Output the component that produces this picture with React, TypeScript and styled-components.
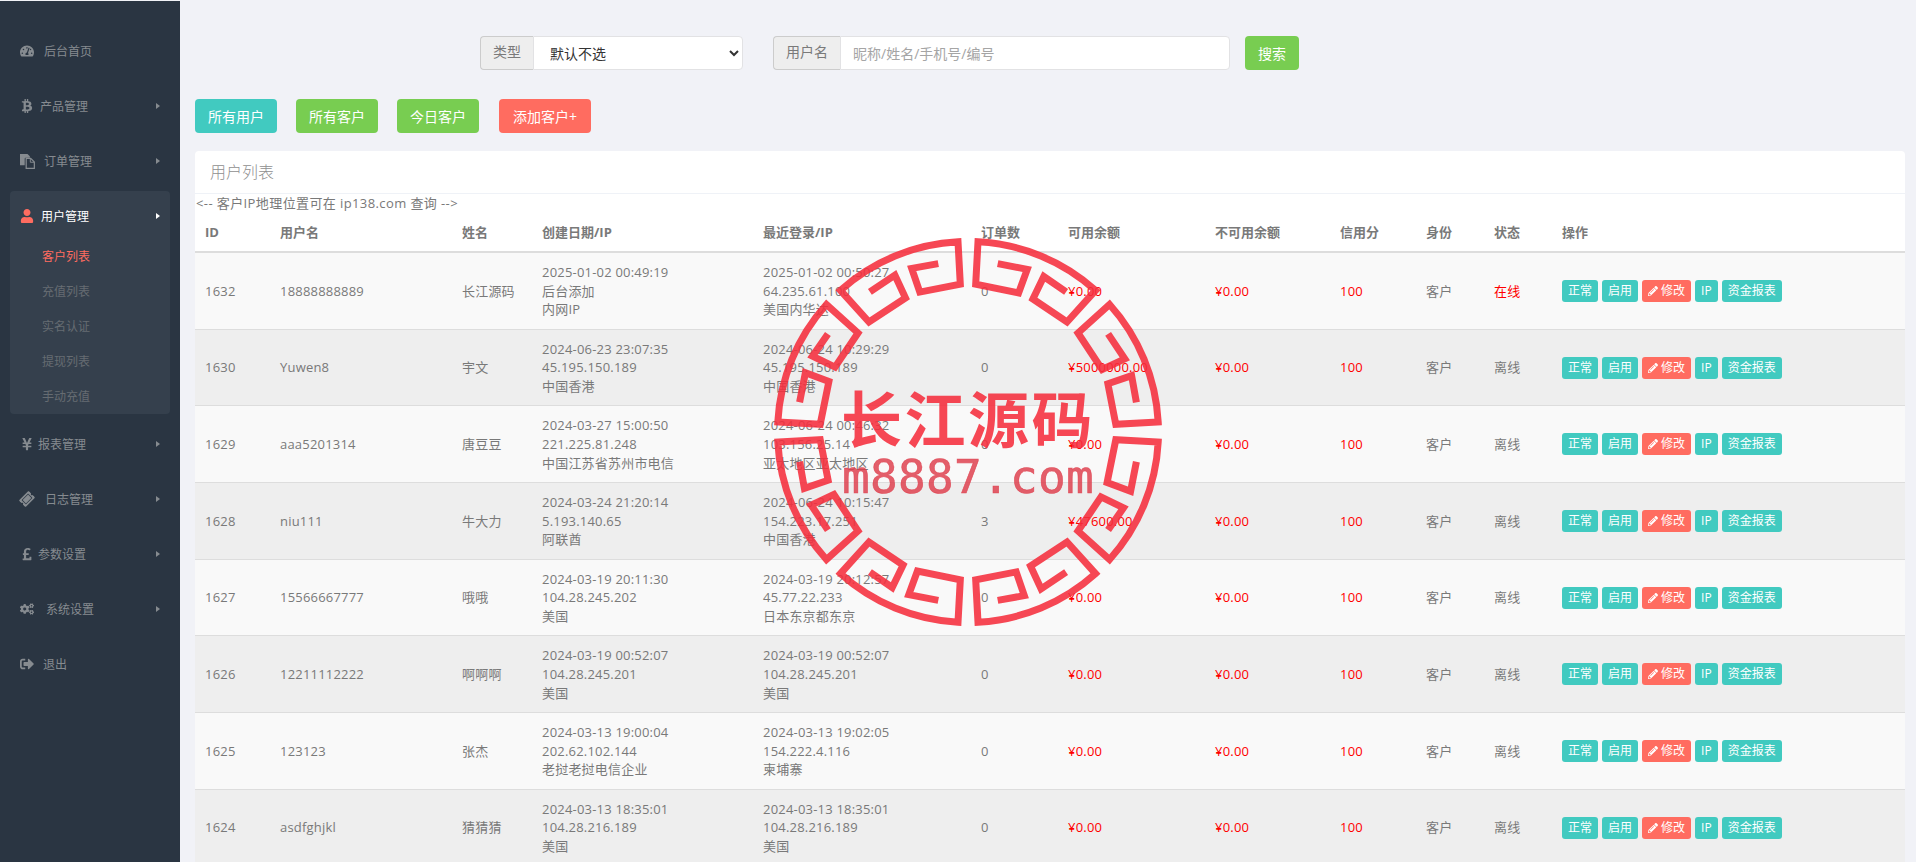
import React from "react";
import styled, { createGlobalStyle } from "styled-components";
import {
  FaTachometerAlt, FaBtc, FaUser, FaYenSign, FaTicketAlt, FaPoundSign, FaCogs, FaSignOutAlt, FaPencilAlt,
} from "react-icons/fa";

const FONT = `"Open Sans", "Noto Sans CJK SC", sans-serif`;

const Global = createGlobalStyle`
  html, body { margin: 0; padding: 0; height: 100%; overflow: hidden; background: #f1f2f7; }
  body { font-family: ${FONT}; font-size: 13px; line-height: 1.42857; color: #797979; }
  * { box-sizing: border-box; }
`;

const Shell = styled.div`
  position: relative;
  display: grid;
  grid-template-columns: 180px 1fr;
  height: 862px;
  padding-top: 1px;
  overflow: hidden;
`;

const Sidebar = styled.nav`
  background: #2a3542;
  padding: 25px 10px 0;
`;

const Group = styled.div<{ $open?: boolean }>`
  margin-bottom: 5px;
  border-radius: 4px;
  background: ${(p) => (p.$open ? "#35404d" : "transparent")};
  padding-bottom: ${(p) => (p.$open ? "1px" : "0")};
`;

const MenuItem = styled.div<{ $open?: boolean }>`
  display: flex;
  align-items: center;
  height: 50px;
  padding: 2px 10px 0;
  font-size: 12px;
  color: ${(p) => (p.$open ? "#ffffff" : "#868b90")};
`;

const MenuIcon = styled.span<{ $w: number; $open?: boolean; $tilt?: boolean }>`
  display: flex;
  align-items: center;
  width: ${(p) => p.$w}px;
  flex: none;
  margin-top: -2px;
  font-size: 14px;
  color: ${(p) => (p.$open ? "#ff6c60" : "#868b90")};
  svg { transform: ${(p) => (p.$tilt ? "rotate(-45deg)" : "none")}; }
`;

const Caret = styled.i<{ $open?: boolean }>`
  margin-left: auto;
  margin-top: -2px;
  border-left: 4px solid ${(p) => (p.$open ? "#ffffff" : "#868b90")};
  border-top: 3.5px solid transparent;
  border-bottom: 3.5px solid transparent;
`;

const SubList = styled.div`
  margin-top: -3px;
`;

const SubItem = styled.div<{ $active?: boolean }>`
  height: 35px;
  line-height: 37px;
  padding-left: 32px;
  font-size: 12px;
  color: ${(p) => (p.$active ? "#ff6c60" : "#666c72")};
`;

const Main = styled.main`
  padding: 35px 11px 0 15px;
  min-width: 0;
`;

const SearchBar = styled.form`
  display: flex;
  align-items: center;
  height: 34px;
  margin: 0;
  padding-left: 285px;
`;

const InputGroup = styled.div<{ $width: number }>`
  display: flex;
  width: ${(p) => p.$width}px;
  height: 34px;
  margin-right: ${(p) => (p.$width > 300 ? 15 : 30)}px;
`;

const Addon = styled.span<{ $width: number }>`
  flex: none;
  width: ${(p) => p.$width}px;
  background: #eeeeee;
  border: 1px solid #cccccc;
  border-right: 0;
  border-radius: 4px 0 0 4px;
  text-align: center;
  line-height: 29px;
  color: #7a7a7a;
  font-size: 14px;
`;

const Select = styled.select`
  flex: 1;
  min-width: 0;
  border: 1px solid #e2e2e4;
  border-radius: 0 4px 4px 0;
  background: #fff;
  padding: 0 12px;
  font: 14px ${FONT};
  color: #333;
  outline: none;
`;

const TextInput = styled.input`
  flex: 1;
  min-width: 0;
  border: 1px solid #e2e2e4;
  border-radius: 0 4px 4px 0;
  background: #fff;
  padding: 0 12px;
  font: 14px ${FONT};
  color: #333;
  outline: none;
  &::placeholder { color: #a5a5a5; opacity: 1; }
`;

const tones = { teal: "#41cac0", green: "#78cd51", red: "#ff6c60" };
type Tone = keyof typeof tones;

const Button = styled.button<{ $tone: Tone; $width: number; $gap?: number }>`
  flex: none;
  width: ${(p) => p.$width}px;
  height: 34px;
  margin-right: ${(p) => p.$gap ?? 0}px;
  padding: 0;
  border: 0;
  border-radius: 4px;
  background: ${(p) => tones[p.$tone]};
  color: #fff;
  font: 14px ${FONT};
`;

const ButtonRow = styled.div`
  display: flex;
  margin-top: 29px;
`;

const Panel = styled.section`
  margin-top: 18px;
  background: #fff;
  border-radius: 4px 4px 0 0;
`;

const PanelHeading = styled.header`
  height: 43px;
  padding: 0 15px;
  line-height: 43px;
  font-size: 16px;
  font-weight: 300;
  color: #8f8f8f;
  border-bottom: 1px solid #eff2f7;
`;

const Note = styled.div`
  height: 18px;
  padding-left: 1px;
  line-height: 18px;
  font-size: 13px;
  letter-spacing: 0.4px;
  color: #797979;
`;

const Table = styled.table`
  width: 100%;
  table-layout: fixed;
  border-collapse: collapse;
  border-spacing: 0;
`;

const Th = styled.th`
  padding: 11px 10px 9px;
  height: 40px;
  text-align: left;
  font-weight: 700;
  font-size: 13px;
  line-height: 18.57px;
  color: #797979;
  border-bottom: 2px solid #dddddd;
`;

const Row = styled.tr<{ $even: boolean }>`
  background: ${(p) => (p.$even ? "#eeeeee" : "#f9f9f9")};
`;

const Td = styled.td<{ $red?: boolean }>`
  padding: 10px;
  vertical-align: middle;
  border-top: 1px solid #dddddd;
  color: ${(p) => (p.$red ? "#ff0000" : "#797979")};
  letter-spacing: 0.2px;
  white-space: nowrap;
`;

const Actions = styled.div`
  display: flex;
  gap: 4px;
  letter-spacing: 0;
`;

const MiniButton = styled.span<{ $tone: Tone }>`
  display: inline-flex;
  align-items: center;
  gap: 3px;
  height: 22px;
  padding: 0 6px;
  border-radius: 3px;
  background: ${(p) => tones[p.$tone]};
  color: #fff;
  font-size: 12px;
  line-height: 18px;
  svg { font-size: 10px; }
`;

const Stamp = styled.div`
  position: absolute;
  left: 768px;
  top: 232px;
  width: 400px;
  height: 400px;
  pointer-events: none;
  svg { display: block; filter: blur(0.4px); }
`;

const StampTitle = styled.div`
  position: absolute;
  left: 0;
  right: 0;
  top: 141px;
  text-align: center;
  font-family: "Noto Sans CJK SC", sans-serif;
  font-size: 61px;
  font-weight: 700;
  line-height: 88px;
  letter-spacing: 2.5px;
  color: rgba(245, 45, 60, 0.88);
  filter: blur(0.4px);
`;

const StampSite = styled.div`
  position: absolute;
  left: 0;
  right: 0;
  top: 215px;
  text-align: center;
  font-family: "DejaVu Sans Mono", monospace;
  font-size: 46px;
  line-height: 60px;
  letter-spacing: 0.3px;
  color: rgba(222, 60, 75, 0.82);
  -webkit-text-stroke: 0.6px rgba(222, 60, 75, 0.82);
  filter: blur(0.4px);
`;

const pt = (r: number, deg: number) => {
  const a = (deg * Math.PI) / 180;
  return `${(200 + r * Math.cos(a)).toFixed(1)} ${(200 - r * Math.sin(a)).toFixed(1)}`;
};

const segment = (k: number) => {
  const a = k * 45 + 3;
  const b = k * 45 + 42;
  return [
    `M${pt(171, a + 7)}`, `L${pt(173, a + 16)}`, `L${pt(148, a + 16)}`, `L${pt(148, a)}`, `L${pt(190.5, a)}`,
    `A190.5 190.5 0 0 0 ${pt(190.5, b)}`,
    `L${pt(148, b)}`, `L${pt(148, b - 17)}`, `L${pt(173, b - 17)}`, `L${pt(171, b - 7)}`,
  ].join(" ");
};

const FilesIcon = () => (
  <svg width="15" height="15" viewBox="0 0 16 16" fill="none">
    <path d="M0 0h8l2.5 2.5V4H6a1 1 0 0 0-1 1v7H0z" fill="currentColor" />
    <path d="M6.6 4.6h4.8l3.9 3.9v6.9H6.6z" stroke="currentColor" strokeWidth="1.3" />
    <path d="M11 4.6v4.2h4" stroke="currentColor" strokeWidth="1" />
  </svg>
);

const menu = [
  { label: "后台首页", w: 24, icon: <FaTachometerAlt />, caret: false },
  { label: "产品管理", w: 20, icon: <FaBtc />, caret: true },
  { label: "订单管理", w: 24, icon: <FilesIcon />, caret: true },
  { label: "用户管理", w: 21, icon: <FaUser />, caret: true, open: true },
  { label: "报表管理", w: 18, icon: <FaYenSign />, caret: true },
  { label: "日志管理", w: 25, icon: <FaTicketAlt />, caret: true, tilt: true },
  { label: "参数设置", w: 18, icon: <FaPoundSign />, caret: true },
  { label: "系统设置", w: 26, icon: <FaCogs />, caret: true },
  { label: "退出", w: 23, icon: <FaSignOutAlt />, caret: false },
];

const subs = ["客户列表", "充值列表", "实名认证", "提现列表", "手动充值"];

const columns: [string, number][] = [
  ["ID", 75], ["用户名", 182], ["姓名", 80], ["创建日期/IP", 221], ["最近登录/IP", 218], ["订单数", 87],
  ["可用余额", 147], ["不可用余额", 125], ["信用分", 86], ["身份", 68], ["状态", 68], ["操作", 353],
];

const rows = [
  ["1632", "18888888889", "长江源码", ["2025-01-02 00:49:19", "后台添加", "内网IP"], ["2025-01-02 00:50:27", "64.235.61.100", "美国内华达"], "0", "¥0.00", "在线"],
  ["1630", "Yuwen8", "宇文", ["2024-06-23 23:07:35", "45.195.150.189", "中国香港"], ["2024-06-24 10:29:29", "45.195.150.189", "中国香港"], "0", "¥5000000.00", "离线"],
  ["1629", "aaa5201314", "唐豆豆", ["2024-03-27 15:00:50", "221.225.81.248", "中国江苏省苏州市电信"], ["2024-06-24 00:46:32", "103.156.25.14", "亚太地区亚太地区"], "0", "¥0.00", "离线"],
  ["1628", "niu111", "牛大力", ["2024-03-24 21:20:14", "5.193.140.65", "阿联酋"], ["2024-06-24 10:15:47", "154.223.17.251", "中国香港"], "3", "¥47600.00", "离线"],
  ["1627", "15566667777", "哦哦", ["2024-03-19 20:11:30", "104.28.245.202", "美国"], ["2024-03-19 20:12:57", "45.77.22.233", "日本东京都东京"], "0", "¥0.00", "离线"],
  ["1626", "12211112222", "啊啊啊", ["2024-03-19 00:52:07", "104.28.245.201", "美国"], ["2024-03-19 00:52:07", "104.28.245.201", "美国"], "0", "¥0.00", "离线"],
  ["1625", "123123", "张杰", ["2024-03-13 19:00:04", "202.62.102.144", "老挝老挝电信企业"], ["2024-03-13 19:02:05", "154.222.4.116", "柬埔寨"], "0", "¥0.00", "离线"],
  ["1624", "asdfghjkl", "猜猜猜", ["2024-03-13 18:35:01", "104.28.216.189", "美国"], ["2024-03-13 18:35:01", "104.28.216.189", "美国"], "0", "¥0.00", "离线"],
] as const;

const Lines = ({ items }: { items: readonly string[] }) => (
  <>
    {items.map((t, i) => (
      <div key={i}>{t}</div>
    ))}
  </>
);

export default function App() {
  return (
    <Shell>
      <Global />
      <Sidebar>
        {menu.map((m) => (
          <Group key={m.label} $open={m.open}>
            <MenuItem $open={m.open}>
              <MenuIcon $w={m.w} $open={m.open} $tilt={m.tilt}>{m.icon}</MenuIcon>
              {m.label}
              {m.caret && <Caret $open={m.open} />}
            </MenuItem>
            {m.open && (
              <SubList>
                {subs.map((s, i) => (
                  <SubItem key={s} $active={i === 0}>{s}</SubItem>
                ))}
              </SubList>
            )}
          </Group>
        ))}
      </Sidebar>
      <Main>
        <SearchBar>
          <InputGroup $width={263}>
            <Addon $width={53}>类型</Addon>
            <Select defaultValue="">
              <option value="">默认不选</option>
            </Select>
          </InputGroup>
          <InputGroup $width={457}>
            <Addon $width={67}>用户名</Addon>
            <TextInput placeholder="昵称/姓名/手机号/编号" />
          </InputGroup>
          <Button type="button" $tone="green" $width={54}>搜索</Button>
        </SearchBar>
        <ButtonRow>
          <Button $tone="teal" $width={82} $gap={19}>所有用户</Button>
          <Button $tone="green" $width={82} $gap={19}>所有客户</Button>
          <Button $tone="green" $width={82} $gap={20}>今日客户</Button>
          <Button $tone="red" $width={92}>添加客户+</Button>
        </ButtonRow>
        <Panel>
          <PanelHeading>用户列表</PanelHeading>
          <Note>{"<-- 客户IP地理位置可在 ip138.com 查询 -->"}</Note>
          <Table>
            <colgroup>
              {columns.map(([name, w]) => (
                <col key={name} width={w} />
              ))}
            </colgroup>
            <thead>
              <tr>
                {columns.map(([name]) => (
                  <Th key={name}>{name}</Th>
                ))}
              </tr>
            </thead>
            <tbody>
              {rows.map((r, i) => (
                <Row key={r[0]} $even={i % 2 === 1}>
                  <Td>{r[0]}</Td>
                  <Td>{r[1]}</Td>
                  <Td>{r[2]}</Td>
                  <Td><Lines items={r[3]} /></Td>
                  <Td><Lines items={r[4]} /></Td>
                  <Td>{r[5]}</Td>
                  <Td $red>{r[6]}</Td>
                  <Td $red>¥0.00</Td>
                  <Td $red>100</Td>
                  <Td>客户</Td>
                  <Td $red={r[7] === "在线"}>{r[7]}</Td>
                  <Td>
                    <Actions>
                      <MiniButton $tone="teal">正常</MiniButton>
                      <MiniButton $tone="teal">启用</MiniButton>
                      <MiniButton $tone="red"><FaPencilAlt />修改</MiniButton>
                      <MiniButton $tone="teal">IP</MiniButton>
                      <MiniButton $tone="teal">资金报表</MiniButton>
                    </Actions>
                  </Td>
                </Row>
              ))}
            </tbody>
          </Table>
        </Panel>
      </Main>
      <Stamp>
        <svg width="400" height="400" viewBox="0 0 400 400" fill="none">
          {Array.from({ length: 8 }, (_, k) => (
            <path key={k} d={segment(k)} stroke="rgba(245,45,60,.88)" strokeWidth="7" strokeLinejoin="miter" />
          ))}
        </svg>
        <StampTitle>长江源码</StampTitle>
        <StampSite>m8887.com</StampSite>
      </Stamp>
    </Shell>
  );
}
